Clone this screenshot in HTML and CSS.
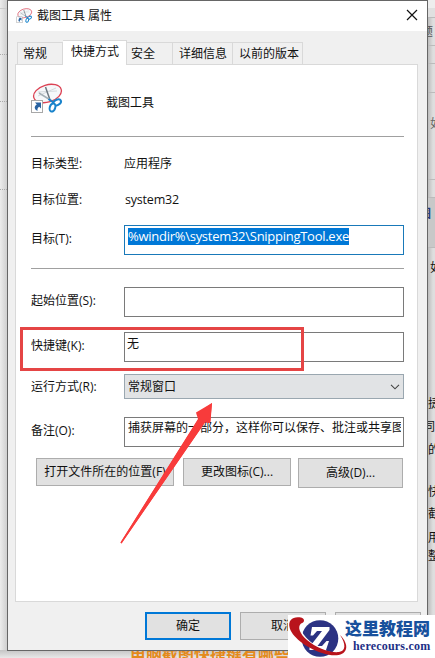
FILE: index.html
```html
<!DOCTYPE html>
<html lang="zh-CN">
<head>
<meta charset="utf-8">
<title>截图工具 属性</title>
<link rel="stylesheet" href="styles.css">
</head>
<body>
<div class="screen">
  <div class="backdrop">
    <div class="side-left"><i></i><i></i><i></i><i></i></div>
    <div class="side-right">
      <div class="r r1"></div>
      <div class="r r2">题</div>
      <div class="r r3"></div>
      <div class="r r4"></div>
      <div class="r r5">如</div>
      <div class="r r6"></div>
      <div class="r r7"><b>图</b></div>
      <div class="r r8">如</div>
      <div class="r r9">捷</div>
      <div class="r r10">同</div>
      <div class="r r11">的</div>
      <div class="r r12">快</div>
      <div class="r r13">截</div>
      <div class="r r14">用</div>
      <div class="r r15">整</div>
    </div>
    <div class="article"><span>电脑截图快捷键有哪些</span></div>
  </div>

  <div class="window">
    <header class="titlebar">
      <svg class="app-icon" viewBox="0 0 34 32"><use href="#snip"/></svg>
      <span>截图工具 属性</span>
      <svg class="close" viewBox="0 0 12 12"><path d="M1 1 11 11M11 1 1 11" stroke="#111" stroke-width="1.2" fill="none"/></svg>
    </header>
    <nav class="tabs">
      <span class="tab t1">常规</span><span class="tab active">快捷方式</span><span class="tab t3">安全</span><span class="tab t4">详细信息</span><span class="tab t5">以前的版本</span>
    </nav>
    <main class="panel">
      <div class="head">
        <svg class="big-icon" viewBox="0 0 34 32">
          <g id="snip">
            <ellipse cx="17.5" cy="10.5" rx="14.3" ry="8.6" transform="rotate(-17 17.5 10.5)" fill="#f6f8fa" stroke="#dc4254" stroke-width="1.3"/>
            <path d="M8 13 26 5M8 9 27 8" stroke="#d5dade" stroke-width="1" fill="none"/>
            <path d="M15.5 4 20 17" stroke="#6d7880" stroke-width="1.5" fill="none"/>
            <path d="M9 10 22 18" stroke="#a5afb5" stroke-width="1.5" fill="none"/>
            <ellipse cx="27" cy="19.5" rx="4.3" ry="2.6" transform="rotate(-28 27 19.5)" fill="#fff" stroke="#1983cb" stroke-width="2"/>
            <ellipse cx="22.5" cy="24.5" rx="2.7" ry="4.2" transform="rotate(18 22.5 24.5)" fill="#fff" stroke="#1983cb" stroke-width="2"/>
            <path d="M18.5 16 24 20" stroke="#1983cb" stroke-width="2"/>
            <rect x="1.5" y="17.5" width="11" height="12" fill="#fff" stroke="#a8a8a8"/>
            <path d="M5 19.5h6v6l-1.8-1.8c-1.5 1-2 2.3-1.7 4.3-3-1.5-4-4.5-.7-6.5z" fill="#2862a1"/>
          </g>
        </svg>
        <span>截图工具</span>
      </div>
      <hr>
      <div class="row type"><label>目标类型:</label><span>应用程序</span></div>
      <div class="row place"><label>目标位置:</label><span class="latin">system32</span></div>
      <div class="row target"><label>目标(T):</label><div class="field focus"><mark>%windir%\system32\SnippingTool.exe</mark></div></div>
      <hr>
      <div class="row start"><label>起始位置(S):</label><div class="field"></div></div>
      <div class="row key"><label>快捷键(K):</label><div class="field">无</div></div>
      <div class="row run"><label>运行方式(R):</label><div class="select">常规窗口<svg viewBox="0 0 10 6"><path d="M1 .8 5 4.8 9 .8" stroke="#444" stroke-width="1.1" fill="none"/></svg></div></div>
      <div class="row note"><label>备注(O):</label><div class="field"><span>捕获屏幕的一部分，这样你可以保存、批注或共享图像</span></div></div>
      <div class="actions">
        <div class="btn b1">打开文件所在的位置(F)</div><div class="btn b2">更改图标(C)...</div><div class="btn b3">高级(D)...</div>
      </div>
    </main>
    <footer class="buttons"><div class="btn ok">确定</div><div class="btn">取消</div><div class="btn"></div></footer>
  </div>

  <div class="highlight"></div>
  <svg class="arrow" viewBox="0 0 94 142"><path d="M.5 140.5 80 14.5 76.500 12 92 1 90.500 20 86.500 18 1.500 141.5z" fill="#f83b3b"/><path d="M.5 140.5 78 17 76 10.500 92 1 90 21 85 20.500 1.500 141.5z" fill="#f83b3b"/></svg>

  <div class="watermark">
    <svg viewBox="0 0 60 43">
      <circle cx="32" cy="23.5" r="18.3" fill="#2b3283"/>
      <path d="M24 12h17.5v3L29.5 31H34l4.5-5H41l-3 9H21.5v-3L34 16h-5l-4 4.5h-2.5z" fill="#fff"/>
      <path d="M12 8C9 17 20 30 38 37c9 4 15 2 17-1" fill="none" stroke="#fff" stroke-width="2.5"/>
      <path d="M52 20c5 5 7 10 6 14-2 7-12 8-24 4C18 33 3 21 1.5 12 0 5 5 1 13 2.5c4 1 4 5 0 6C9 12 12 19 19 25c9 8 23 13 32 12 7-1 7-8 1-17z" fill="#b9141c"/>
    </svg>
    <div class="brand"><b>这里教程网</b><strong>herecours.com</strong></div>
  </div>
</div>
</body>
</html>
```
FILE: styles.css
```css
* { box-sizing: border-box; }
body {
  margin: 0;
  font: 12px/16px "Open Sans", "Noto Sans CJK SC", sans-serif;
  color: #111;
}
.screen { position: relative; width: 435px; height: 658px; overflow: hidden; background: #e5e5e5; }

/* page behind the dialog */
.backdrop { height: 658px; display: grid; grid-template: 650px 8px / 7px 1fr 7px; }
.side-left { background: linear-gradient(90deg, #ececec, #cfcfcf); display: flex; flex-direction: column; }
.side-left i { border-top: 1px dotted #aaa; margin-top: 54px; height: 0; }
.side-left i:first-child { border-top: 1px solid #ccc; margin-top: 8px; }
.side-left i:nth-child(2) { margin-top: 45px; }
.side-left i:nth-child(3) { margin-top: 46px; }
.side-left i:nth-child(4) { margin-top: 87px; }
.side-right { grid-column: 3; background: linear-gradient(90deg, #bcbcbc, #dedede 5px); display: flex; flex-direction: column; overflow: hidden; }
.r { width: 7px; overflow: hidden; flex: none; display: flex; justify-content: flex-end; align-items: center; }
.r1 { height: 18px; border-bottom: 1px solid #bbb; background: #e0e0e0; border-top: 8px solid #eee; }
.r2 { height: 28px; border-bottom: 1px solid #bbb; padding-right: 2px; color: #555; }
.r3 { height: 18px; border-bottom: 1px solid #bbb; }
.r4 { height: 29px; border-bottom: 1px solid #bbb; }
.r5 { height: 87px; border-bottom: 1px solid #bbb; padding-bottom: 24px; justify-content: flex-start; padding-left: 2px; color: #666; }
.r6 { height: 18px; border-bottom: 1px solid #bbb; }
.r7 { height: 50px; border-bottom: 1px solid #bbb; background: #c8c8c8; padding: 0 4px 18px 0; color: #263b78; }
.r8 { height: 40px; justify-content: flex-start; padding-left: 2px; }
.r9 { height: 16px; margin-top: 108px; justify-content: flex-start; }
.r10 { height: 16px; margin-top: 7px; }
.r11 { height: 16px; margin-top: 7px; justify-content: flex-start; }
.r12 { height: 16px; margin-top: 26px; justify-content: flex-start; }
.r13 { height: 16px; margin-top: 6px; justify-content: flex-start; }
.r14 { height: 16px; margin-top: 8px; justify-content: flex-start; }
.r15 { height: 16px; margin-top: 2px; justify-content: flex-start; }
.article {
  grid-area: 2 / 1 / 3 / 4; height: 8px; overflow: hidden; display: flex; align-items: flex-end;
  padding-left: 130px; background: linear-gradient(#c4c4c4, #e8e8e8); color: #e58a1b;
  font-size: 16px; font-weight: bold; white-space: nowrap;
}
.article span { height: 14px; line-height: 20px; }

/* dialog */
.window {
  position: absolute; left: 7px; top: 0; width: 421px; height: 651px;
  background: #f0f0f0; border: 1px solid #666; display: flex; flex-direction: column;
}
.titlebar { height: 30px; background: #fff; display: flex; align-items: center; padding: 0 9px 0 8px; flex: none; }
.app-icon { width: 17px; height: 16px; margin-right: 4px; }
.close { width: 12px; height: 12px; margin: -2px 0 0 auto; }
.tabs { height: 33px; flex: none; display: flex; align-items: flex-end; padding-left: 9px; }
.tab { height: 22px; line-height: 22px; border: 1px solid #d9d9d9; border-width: 1px 1px 0 0; white-space: nowrap; }
.t1 { width: 46px; padding-left: 5px; border-left-width: 1px; }
.tab.active {
  width: 64px; height: 25px; line-height: 21px; padding-left: 8px; background: #fff;
  margin-bottom: -1px; position: relative; z-index: 1;
}
.t3 { width: 46px; padding-left: 4px; }
.t4 { width: 60px; padding-left: 6px; }
.t5 { width: 70px; padding-left: 6px; }
.panel { margin: 0 9px 0 7px; height: 538px; flex: none; background: #fff; border: 1px solid #d9d9d9; padding: 0 13px 0 15px; }
.head { height: 71px; display: flex; align-items: center; gap: 42px; padding-top: 4px; }
.big-icon { width: 34px; height: 32px; margin: -8px 0 0 -1px; }
hr { margin: 0; border: 0; height: 1px; background: #a0a0a0; }
.row { display: grid; grid-template-columns: 93px 280px; align-items: center; }
.type { margin-top: 18px; height: 18px; }
.place { margin-top: 18px; height: 18px; }
.latin { padding-left: 1px; }
.place .latin { font-size: 12.5px; letter-spacing: -.2px; line-height: 14px; }
.focus { font-size: 13px; }
.target { margin-top: 16px; margin-bottom: 13px; }
.target label { padding-bottom: 2px; }
.start label, .key label, .note label { padding-bottom: 3px; }
.field {
  height: 30px; border: 1px solid #7a7a7a; background: #fff; padding: 2px 2px 0 3px;
  overflow: hidden; white-space: nowrap;
}
.focus { border-color: #1979b9; }
mark { display: inline-block; height: 17px; background: #0078d7; color: #fff; line-height: 17px; letter-spacing: -.27px; }
.start { margin-top: 18px; }
.key { margin-top: 15px; }
.key .field { padding: 3px 2px 0; }
.run { margin-top: 12px; }
.select {
  height: 25px; border: 1px solid #9aa7b0; background: #e1e3e5; display: flex;
  align-items: center; justify-content: space-between; padding: 0 3px;
}
.select svg { width: 10px; height: 6px; }
.note { margin-top: 18px; }
.note .field span { display: block; overflow: hidden; }
.actions { display: flex; margin: 11px 0 0 5px; align-items: flex-start; }
.btn {
  height: 28px; border: 1px solid #adadad; background: #e1e1e1; display: flex;
  align-items: center; justify-content: center; white-space: nowrap;
}
.b1 { width: 138px; }
.b2 { width: 108px; margin-left: 9px; }
.b3 { width: 105px; height: 30px; margin-left: 7px; }
.buttons { display: flex; gap: 9px; padding: 10px 0 0 137px; }
.buttons .btn { width: 86px; flex: none; }
.buttons .ok { border: 2px solid #0078d7; }

/* annotations */
.highlight { position: absolute; left: 20px; top: 327px; width: 284px; height: 44px; border: 3px solid #e54545; }
.arrow { position: absolute; left: 120px; top: 402px; width: 94px; height: 142px; }
.watermark {
  position: absolute; left: 288px; top: 615px; width: 147px; height: 43px;
  background: #fff; display: flex; color: #1d2f86;
}
.watermark svg { width: 60px; height: 43px; flex: none; }
.brand { display: flex; flex-direction: column; margin-left: -3px; white-space: nowrap; }
.brand b { font: 900 17px/24px "Noto Sans CJK SC", sans-serif; color: #18519d; padding-top: 1px; }
.brand strong { font: bold 12px/12px "Liberation Serif", serif; padding-left: 8px; letter-spacing: .2px; }
```
